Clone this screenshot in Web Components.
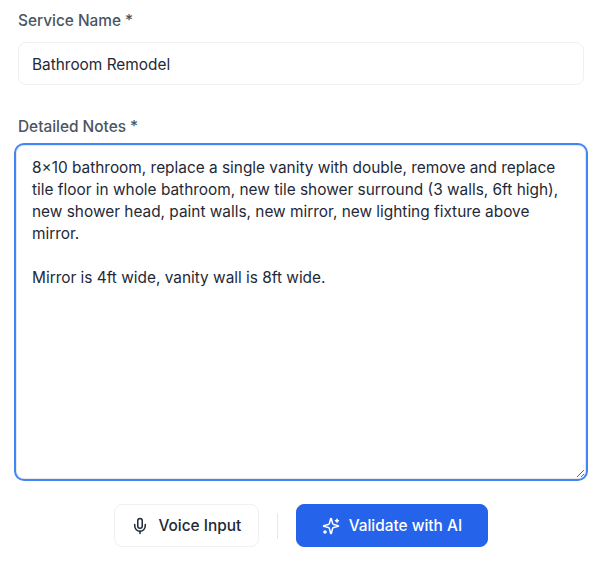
<!DOCTYPE html>
<html>
<head>
<meta charset="utf-8">
<title>Service form</title>
<style>
  html, body { margin: 0; background: #fff; }
  body { font-family: Inter, sans-serif; }
</style>
</head>
<body>
<service-form>
  <form-field label="Service Name *">
    <text-box>Bathroom Remodel</text-box>
  </form-field>
  <form-field label="Detailed Notes *">
    <notes-box>8×10 bathroom, replace a single vanity with double, remove and replace tile floor in whole bathroom, new tile shower surround (3 walls, 6ft high), new shower head, paint walls, new mirror, new lighting fixture above mirror.

Mirror is 4ft wide, vanity wall is 8ft wide.</notes-box>
  </form-field>
  <form-actions>
    <action-button icon="mic" slot="left">Voice Input</action-button>
    <action-button icon="sparkles" primary>Validate with AI</action-button>
  </form-actions>
</service-form>

<script>
// Ikon yang dipakai tombol
const ICONS = {
  mic: `
    <path d="M12 2a3 3 0 0 0-3 3v7a3 3 0 0 0 6 0V5a3 3 0 0 0-3-3Z"/>
    <path d="M19 10v2a7 7 0 0 1-14 0v-2"/>
    <line x1="12" x2="12" y1="19" y2="22"/>`,
  sparkles: `
    <path d="M9.937 15.5A2 2 0 0 0 8.5 14.063l-6.135-1.582a.5.5 0 0 1 0-.962L8.5 9.936A2 2 0 0 0 9.937 8.5l1.582-6.135a.5.5 0 0 1 .963 0L14.063 8.5A2 2 0 0 0 15.5 9.937l6.135 1.581a.5.5 0 0 1 0 .964L15.5 14.063a2 2 0 0 0-1.437 1.437l-1.582 6.135a.5.5 0 0 1-.963 0z"/>
    <path d="M20 3v4"/>
    <path d="M22 5h-4"/>
    <circle cx="4" cy="20" r="1.4"/>`
};

class ServiceForm extends HTMLElement {
  connectedCallback() {
    this.attachShadow({ mode: 'open' });
    this.shadowRoot.innerHTML = `
      <style>
        :host {
          display: flex;
          flex-direction: column;
          width: 609px;
          height: 563px;
          box-sizing: border-box;
          padding: 12px 25px 0 18px;
          font-family: Inter, sans-serif;
        }
      </style>
      <slot></slot>
    `;
  }
}

class FormField extends HTMLElement {
  connectedCallback() {
    this.attachShadow({ mode: 'open' });
    this.shadowRoot.innerHTML = `
      <style>
        :host {
          display: block;
          margin-bottom: 33px;
        }
        :host(:last-of-type) {
          margin-bottom: 25px;
        }
        label {
          display: block;
          height: 18px;
          margin-bottom: 12px;
          font-size: 15.4px;
          line-height: 18px;
          font-weight: 500;
          color: #4b5563;
        }
      </style>
      <label>${this.getAttribute('label')}</label>
      <slot></slot>
    `;
  }
}

class TextBox extends HTMLElement {
  connectedCallback() {
    this.attachShadow({ mode: 'open' });
    this.shadowRoot.innerHTML = `
      <style>
        :host {
          display: block;
          box-sizing: border-box;
          height: 43px;
          padding: 0 13px;
          border: 1px solid #eef0f5;
          border-radius: 8px;
          background: #fff;
          font-size: 15.4px;
          line-height: 43px;
          color: #1f2937;
        }
      </style>
      <slot></slot>
    `;
  }
}

class NotesBox extends HTMLElement {
  connectedCallback() {
    this.attachShadow({ mode: 'open' });
    this.shadowRoot.innerHTML = `
      <style>
        :host {
          display: block;
          box-sizing: border-box;
          height: 334px;
          margin: -3px -2px 0;
          padding: 11px 15px;
          border: 1px solid #e5e7eb;
          border-radius: 8px;
          outline: 2px solid #4285f4;
          background: #fff;
          font-size: 15.4px;
          line-height: 22px;
          color: #1f2937;
          overflow: auto;
          resize: vertical;
        }
        .text {
          white-space: pre-wrap;
        }
      </style>
      <div class="text"><slot></slot></div>
    `;
  }
}

class FormActions extends HTMLElement {
  connectedCallback() {
    this.attachShadow({ mode: 'open' });
    this.shadowRoot.innerHTML = `
      <style>
        :host {
          display: flex;
          justify-content: center;
          align-items: center;
          gap: 18px;
        }
        .divider {
          width: 1px;
          height: 26px;
          background: #e5e7eb;
        }
      </style>
      <slot name="left"></slot>
      <div class="divider"></div>
      <slot></slot>
    `;
  }
}

class ActionButton extends HTMLElement {
  connectedCallback() {
    const primary = this.hasAttribute('primary');
    this.attachShadow({ mode: 'open' });
    this.shadowRoot.innerHTML = `
      <style>
        :host {
          display: inline-flex;
          align-items: center;
          gap: 9px;
          box-sizing: border-box;
          height: 43px;
          padding: 0 ${primary ? 25 : 16.5}px;
          border: 1px solid ${primary ? '#2563eb' : '#eef0f5'};
          border-radius: 8px;
          background: ${primary ? '#2563eb' : '#fff'};
          color: ${primary ? '#fff' : '#1f2937'};
          font-size: 15.4px;
          font-weight: 500;
        }
        svg {
          width: 18px;
          height: 18px;
          fill: none;
          stroke: currentColor;
          stroke-width: 2;
          stroke-linecap: round;
          stroke-linejoin: round;
        }
      </style>
      <svg viewBox="0 0 24 24">${ICONS[this.getAttribute('icon')]}</svg>
      <slot></slot>
    `;
  }
}

customElements.define('service-form', ServiceForm);
customElements.define('form-field', FormField);
customElements.define('text-box', TextBox);
customElements.define('notes-box', NotesBox);
customElements.define('form-actions', FormActions);
customElements.define('action-button', ActionButton);
</script>
</body>
</html>
